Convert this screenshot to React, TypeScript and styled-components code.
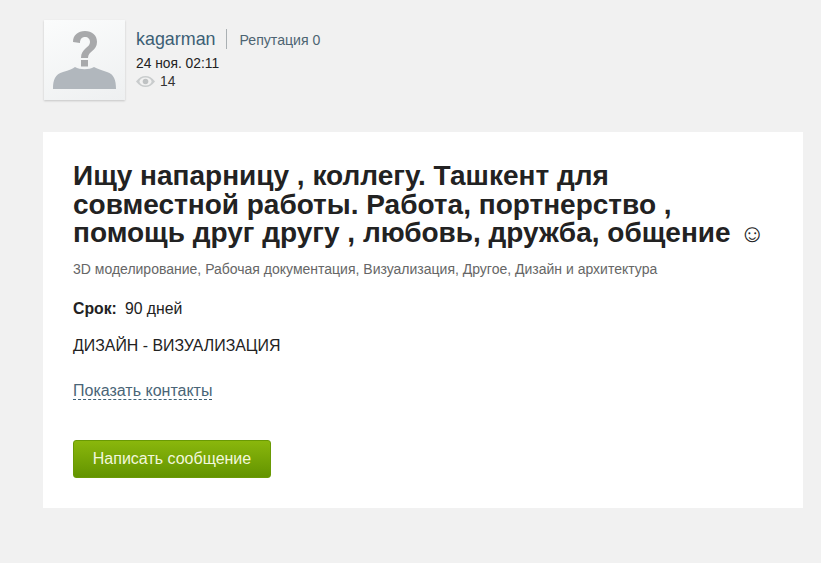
import React from "react";
import styled, { createGlobalStyle } from "styled-components";

const Global = createGlobalStyle`
  html, body { margin: 0; padding: 0; background: #f1f1f1; }
  body { font-family: "Liberation Sans", Arial, sans-serif; color: #222; }
`;
const Page = styled.div`
  width: 821px; height: 563px; overflow: hidden; box-sizing: border-box;
  padding: 20px 18px 0 43px;
`;
const Header = styled.header`
  display: flex; align-items: flex-start; gap: 11px; height: 112px; padding-left: 1px;
`;
const Avatar = styled.div`
  width: 81px; height: 80px; flex: none;
  background: linear-gradient(160deg, #fbfcfc 0%, #eef0f1 100%);
  box-shadow: 0 1px 2px rgba(0,0,0,.18);
  svg { display: block; }
`;
const Meta = styled.div`
  display: flex; flex-direction: column; padding-top: 9px;
`;
const NameRow = styled.div`
  display: flex; align-items: center; height: 20px;
`;
const Name = styled.a`
  font-size: 17.9px; color: #3c5f75; padding-right: 10px; border-right: 1px solid #aab0b3; line-height: 20px;
`;
const Reputation = styled.span`
  font-size: 14.1px; color: #4d6472; margin-left: 13px; position: relative; top: 1px;
`;
const DateText = styled.div`
  font-size: 13.8px; line-height: 17px; margin-top: 6px; color: #222;
`;
const Views = styled.div`
  display: flex; align-items: center; gap: 5px; font-size: 13.8px; line-height: 17px; color: #333; margin-top: 1px;
`;
const Card = styled.main`
  background: #fff; width: 760px; height: 376px; box-sizing: border-box;
  padding: 30px 30px 0;
`;
const Title = styled.h1`
  margin: 0; max-width: 700px; font-size: 28px; line-height: 28.5px; font-weight: 700; color: #222;
`;
const Smile = styled.span`
  font-family: "Liberation Sans", sans-serif; font-weight: 400; font-size: 25px; margin-left: 1px;
`;
const Categories = styled.div`
  font-size: 14px; line-height: 16px; color: #666; margin-top: 13px;
`;
const Term = styled.div`
  display: flex; gap: 8px; font-size: 15.8px; line-height: 18px; margin-top: 23px; color: #222;
  b { font-weight: 700; }
`;
const Description = styled.div`
  font-size: 15.9px; line-height: 18px; margin-top: 19px; color: #222;
`;
const Contacts = styled.a`
  display: table; font-size: 16px; line-height: 17px; margin-top: 27px; color: #4a6577;
  border-bottom: 1px dashed #3c5f75;
`;
const Button = styled.button`
  display: block; width: 198px; height: 38px; margin-top: 40px; padding: 0;
  font: 16px "Liberation Sans", Arial, sans-serif; color: #f2f7dc;
  background: linear-gradient(#8ab70c, #639400);
  border: 1px solid #6a9a04; border-radius: 3px;
`;

export default function App() {
  return (
    <>
      <Global />
      <Page>
        <Header>
          <Avatar>
            <svg width="81" height="80" viewBox="0 0 81 80">
              <path d="M9 69 C9 60 11 54 19 52 C25 50 29 49 31 47 C36 50 45 50 50 47 C53 49 58 50 63 52 C70 54 72 60 72 69 Z" fill="#b1b7bd" />
              <path d="M29 22 C29 15 34 11 41 11 C48 11 53 15 53 22 C53 31 44 31 44 38 L37 38 C37 28 46 28 46 22 C46 19 44 17 41 17 C38 17 36 19 36 23 Z" fill="#a8a9ab" />
              <rect x="37" y="40" width="7" height="6.5" fill="#a8a9ab" />
            </svg>
          </Avatar>
          <Meta>
            <NameRow>
              <Name>kagarman</Name>
              <Reputation>Репутация 0</Reputation>
            </NameRow>
            <DateText>24 ноя. 02:11</DateText>
            <Views>
              <svg width="19" height="11" viewBox="0 0 19 11">
                <path d="M0 5.5 C3 1.5 6 0 9.5 0 C13 0 16 1.5 19 5.5 C16 9.5 13 11 9.5 11 C6 11 3 9.5 0 5.5 Z" fill="#c9cccd" />
                <ellipse cx="9.5" cy="5.5" rx="6" ry="4" fill="#f1f1f1" />
                <circle cx="9.5" cy="5.5" r="2.8" fill="#bfc2c3" />
              </svg>
              14
            </Views>
          </Meta>
        </Header>
        <Card>
          <Title>
            Ищу напарницу , коллегу. Ташкент для совместной работы. Работа, портнерство , помощь друг другу , любовь, дружба, общение <Smile>☺</Smile>
          </Title>
          <Categories>3D моделирование, Рабочая документация, Визуализация, Другое, Дизайн и архитектура</Categories>
          <Term><b>Срок:</b><span>90 дней</span></Term>
          <Description>ДИЗАЙН - ВИЗУАЛИЗАЦИЯ</Description>
          <Contacts>Показать контакты</Contacts>
          <Button>Написать сообщение</Button>
        </Card>
      </Page>
    </>
  );
}
